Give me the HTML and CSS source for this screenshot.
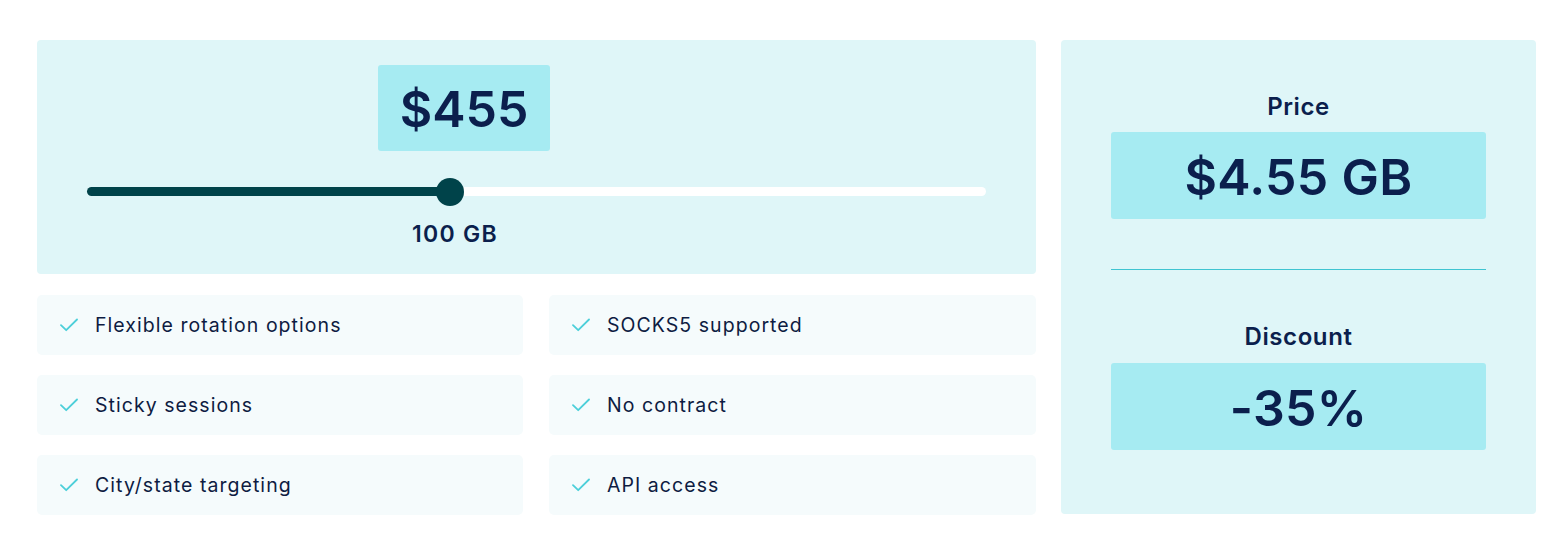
FILE: index.html
```html
<!DOCTYPE html>
<html lang="en">
<head>
<meta charset="utf-8">
<title>Pricing</title>
<link rel="stylesheet" href="styles.css">
</head>
<body>
<div class="page">
  <div class="left">
    <section class="slider-panel">
      <div class="bubble-row">
        <div class="bubble" style="margin-left: 291px;">$455</div>
      </div>
      <div class="track">
        <div class="fill" style="width: 363px;"></div>
        <div class="thumb"></div>
      </div>
      <div class="label-row">
        <span class="value-label" style="margin-left: 325px;">100 GB</span>
      </div>
    </section>
    <ul class="features">
      <li class="feature"><svg class="check" viewBox="0 0 18 14" width="18" height="14"><path d="M1 7.2 L6.2 12.2 L17 1.5"/></svg><span>Flexible rotation options</span></li>
      <li class="feature"><svg class="check" viewBox="0 0 18 14" width="18" height="14"><path d="M1 7.2 L6.2 12.2 L17 1.5"/></svg><span>SOCKS5 supported</span></li>
      <li class="feature"><svg class="check" viewBox="0 0 18 14" width="18" height="14"><path d="M1 7.2 L6.2 12.2 L17 1.5"/></svg><span>Sticky sessions</span></li>
      <li class="feature"><svg class="check" viewBox="0 0 18 14" width="18" height="14"><path d="M1 7.2 L6.2 12.2 L17 1.5"/></svg><span>No contract</span></li>
      <li class="feature"><svg class="check" viewBox="0 0 18 14" width="18" height="14"><path d="M1 7.2 L6.2 12.2 L17 1.5"/></svg><span>City/state targeting</span></li>
      <li class="feature"><svg class="check" viewBox="0 0 18 14" width="18" height="14"><path d="M1 7.2 L6.2 12.2 L17 1.5"/></svg><span>API access</span></li>
    </ul>
  </div>
  <aside class="summary">
    <div class="summary-label">Price</div>
    <div class="summary-box">$4.55 GB</div>
    <hr class="divider">
    <div class="summary-label discount">Discount</div>
    <div class="summary-box">-35%</div>
  </aside>
</div>
</body>
</html>
```

FILE: styles.css
```css
* { box-sizing: border-box; }
html, body { margin: 0; padding: 0; background: #ffffff; }
body {
  font-family: Inter, "Noto Sans", "Liberation Sans", sans-serif;
  color: #0b1f4d;
}
.page {
  display: flex;
  gap: 25px;
  padding: 40px 0 0 37px;
}
.left {
  width: 999px;
  display: flex;
  flex-direction: column;
  gap: 21px;
}
.slider-panel {
  height: 234px;
  background: #dff6f8;
  border-radius: 4px;
  padding: 25px 50px 0 50px;
}
.bubble-row { display: flex; height: 86px; }
.bubble {
  width: 172px;
  height: 86px;
  background: #a6ebf2;
  border-radius: 3px;
  display: flex;
  align-items: center;
  justify-content: center;
  font-size: 50px;
  font-weight: 600;
  letter-spacing: 0;
  color: #0b1f4d;
  padding-top: 2px;
}
.track {
  margin-top: 36px;
  height: 9px;
  background: #ffffff;
  border-radius: 5px;
  display: flex;
  align-items: center;
}
.fill {
  height: 9px;
  background: #00434a;
  border-radius: 5px 0 0 5px;
}
.thumb {
  width: 28px;
  height: 28px;
  border-radius: 50%;
  background: #00434a;
  margin-left: -14px;
  flex: none;
}
.label-row { display: flex; margin-top: 23px; }
.value-label {
  font-size: 23px;
  font-weight: 600;
  line-height: 30px;
  letter-spacing: 1.3px;
  color: #0b1f4d;
}
.features {
  list-style: none;
  margin: 0;
  padding: 0;
  display: grid;
  grid-template-columns: 486px 487px;
  column-gap: 26px;
  row-gap: 20px;
}
.feature {
  height: 60px;
  background: #f5fbfc;
  border-radius: 5px;
  display: flex;
  align-items: center;
  padding-left: 23px;
  font-size: 19.5px;
  letter-spacing: 1.05px;
  color: #0e1c42;
}
.check {
  flex: none;
  margin-right: 17px;
  fill: none;
  stroke: #4ccfd9;
  stroke-width: 1.8;
  stroke-linecap: round;
  stroke-linejoin: round;
}
.summary {
  width: 475px;
  height: 474px;
  background: #dff6f8;
  border-radius: 4px;
  padding: 52px 50px 0 50px;
  display: flex;
  flex-direction: column;
}
.summary-label {
  text-align: center;
  font-size: 24px;
  font-weight: 600;
  line-height: 30px;
  letter-spacing: 0.6px;
  margin-bottom: 10px;
  color: #0b1f4d;
}
.summary-label.discount { margin-top: 52px; margin-bottom: 11px; }
.summary-box {
  height: 87px;
  background: #a6ebf2;
  border-radius: 3px;
  display: flex;
  align-items: center;
  justify-content: center;
  font-size: 50px;
  font-weight: 600;
  letter-spacing: 0.3px;
  color: #0b1f4d;
  padding-top: 2px;
}
.divider {
  margin: 50px 0 0 0;
  height: 0;
  border: 0;
  border-top: 1px solid #3fc4d1;
  flex: none;
}
```
